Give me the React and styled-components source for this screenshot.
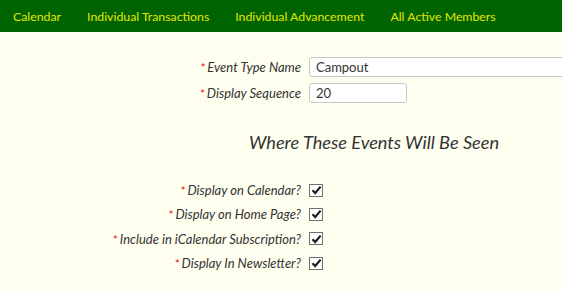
import styled, { createGlobalStyle } from "styled-components";

const GlobalStyle = createGlobalStyle`
  body {
    margin: 0;
    background: #fffff0;
    font-family: Lato, "Open Sans", sans-serif;
  }
`;

const StyledPage = styled.div`
  width: 562px;
  height: 291px;
  overflow: hidden;
  background: #fffff0;
`;

const StyledNav = styled.nav`
  display: flex;
  height: 32px;
  align-items: center;
  background: #006400;
`;

const StyledNavItem = styled.a`
  padding: 0 13px;
  color: #e6e600;
  font-size: 12.3px;
  text-decoration: none;
  white-space: nowrap;
`;

const StyledForm = styled.div`
  display: grid;
  grid-template-columns: 301px minmax(0, 1fr);
  column-gap: 8px;
  align-items: center;
  padding-top: 22px;
`;

const StyledLabel = styled.div`
  text-align: right;
  font-style: italic;
  font-size: 13px;
  color: #333;
  white-space: nowrap;
  height: ${(props) => props.$height || 26}px;
  line-height: ${(props) => props.$height || 26}px;
`;

const StyledStar = styled.span`
  color: #e00;
  margin-right: 2px;
  font-style: normal;
  font-size: 11px;
`;

const StyledInput = styled.input`
  box-sizing: border-box;
  height: 20px;
  width: ${(props) => props.$width};
  border: 1px solid #c8c8c8;
  border-radius: 3px;
  background: #fff;
  padding: 0 6px;
  font-family: Lato, "Open Sans", sans-serif;
  font-size: 13px;
  color: #333;
  outline: none;
`;

const StyledHeading = styled.h2`
  grid-column: 1 / span 2;
  margin: 0;
  padding: 25px 0 25px 186px;
  text-align: center;
  font-size: 18.2px;
  font-weight: normal;
  font-style: italic;
  color: #333;
`;

const StyledCheck = styled.span`
  display: flex;
  box-sizing: border-box;
  width: 14px;
  height: 13px;
  border: 1px solid #707070;
  background: #fff;
  align-items: center;
  justify-content: center;
`;

function Check() {
  return (
    <StyledCheck>
      <svg width="11" height="10" viewBox="0 0 11 10">
        <path d="M1.5 5.2 L4.2 8 L9.6 1.6" fill="none" stroke="#1e1e1e" strokeWidth="2.2" />
      </svg>
    </StyledCheck>
  );
}

function Label({ children, height }) {
  return (
    <StyledLabel $height={height}>
      <StyledStar>*</StyledStar>
      {children}
    </StyledLabel>
  );
}

const navItems = ["Calendar", "Individual Transactions", "Individual Advancement", "All Active Members"];
const seenItems = [
  "Display on Calendar?",
  "Display on Home Page?",
  "Include in iCalendar Subscription?",
  "Display In Newsletter?",
];

export default function App() {
  return (
    <StyledPage>
      <GlobalStyle />
      <StyledNav>
        {navItems.map((item) => (
          <StyledNavItem key={item} href="#">{item}</StyledNavItem>
        ))}
      </StyledNav>
      <StyledForm>
        <Label>Event Type Name</Label>
        <StyledInput $width="300px" defaultValue="Campout" />
        <Label>Display Sequence</Label>
        <StyledInput $width="98px" defaultValue="20" />
        <StyledHeading>Where These Events Will Be Seen</StyledHeading>
        {seenItems.map((item) => [
          <Label key={item} height={24.3}>{item}</Label>,
          <Check key={item + "-box"} />,
        ])}
      </StyledForm>
    </StyledPage>
  );
}
